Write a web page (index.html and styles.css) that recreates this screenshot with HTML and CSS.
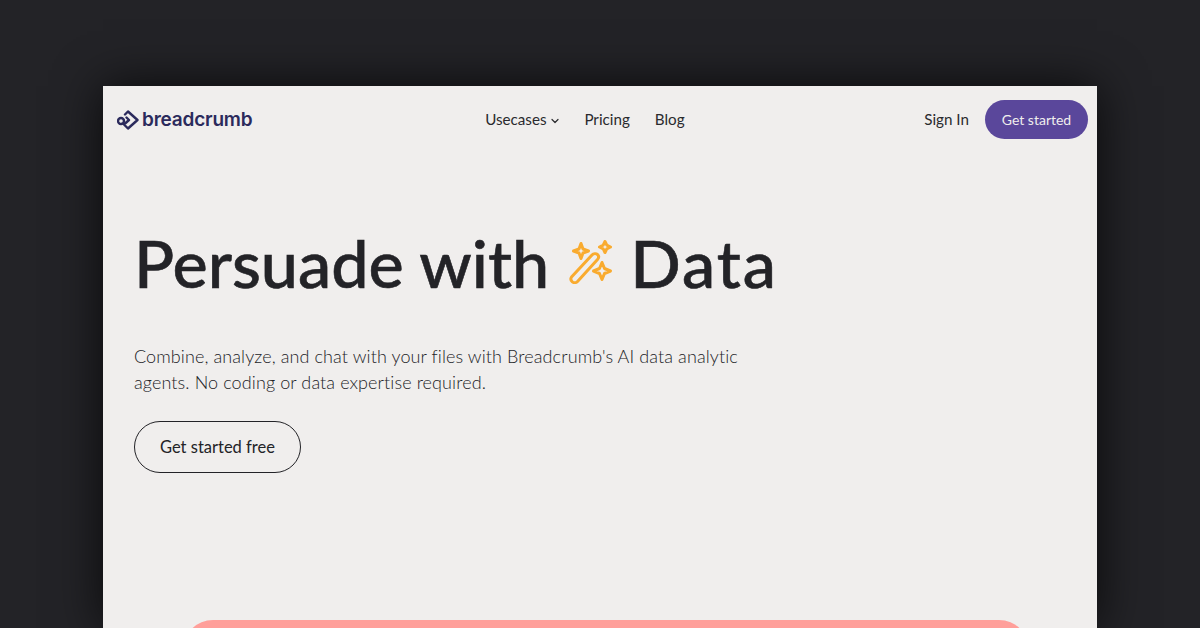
FILE: index.html
```html
<!DOCTYPE html>
<html lang="en">
<head>
  <meta charset="UTF-8" />
  <title>Breadcrumb</title>
  <link rel="stylesheet" href="styles.css">
</head>
<body>
  <div class="page">
    <nav class="nav">
      <a class="logo">
        <svg class="logo-mark" viewBox="0 0 22 20" width="22" height="20" fill="none" stroke="#2b2a5c" stroke-width="2.4" stroke-linejoin="round" stroke-linecap="round">
          <path d="M8 4.500 11 1.500 20.500 10 11 18.500 7 14.500 12 10 9.500 7.500" />
          <circle cx="4" cy="11" r="3" />
        </svg>
        <span>breadcrumb</span>
      </a>
      <div class="nav-links">
        <a class="nav-link">Usecases
          <svg class="chevron" viewBox="0 0 8 6" width="8" height="6" fill="none" stroke="#2a2a2e" stroke-width="1.2" stroke-linecap="round" stroke-linejoin="round">
            <path d="M1 1.500 4 4.500 7 1.500" />
          </svg>
        </a>
        <a class="nav-link">Pricing</a>
        <a class="nav-link">Blog</a>
      </div>
      <div class="nav-right">
        <a class="nav-link sign-in">Sign In</a>
        <a class="btn-primary">Get started</a>
      </div>
    </nav>

    <section class="hero">
      <h1>Persuade with
        <svg class="wand" viewBox="0 0 44 44" width="44" height="44" fill="none" stroke="#f9ab2f" stroke-width="3" stroke-linejoin="round" stroke-linecap="round">
          <path d="M2.500 37 23 15C24.500 13.500 27 13.200 28.500 14.500 30 15.900 29.800 18 28.500 19.500L8.500 41.500C7 43 4.500 43 3.200 41.700 1.800 40.300 1.500 38.500 2.500 37Z" />
          <path d="M12 3.500 14 9 19.500 11 14 13 12 18.500 10 13 4.500 11 10 9Z" />
          <path d="M36 1.500 37.800 5.200 41.500 7 37.800 8.800 36 12.500 34.200 8.800 30.500 7 34.200 5.200Z" />
          <path d="M33 22.500 35.500 28.500 41.500 31 35.500 33.500 33 39.500 30.500 33.500 24.500 31 30.500 28.500Z" />
        </svg>
        <span class="h1-last">Data</span></h1>
      <p class="lead">Combine, analyze, and chat with your files with Breadcrumb's AI data analytic agents. No coding or data expertise required.</p>
      <a class="btn-outline">Get started free</a>
    </section>

    <div class="preview"></div>
  </div>
</body>
</html>
```

FILE: styles.css
```css
html, body {
  height: 100%;
}

body {
  margin: 0;
  padding-top: 86px;
  box-sizing: border-box;
  overflow: hidden;
  background-color: #232327;
  font-family: 'Lato', sans-serif;
  color: #232327;
}

.page {
  width: 994px;
  height: 542px;
  margin-left: 103px;
  background-color: #f0eeed;
  box-shadow: 0 0 45px rgba(0, 0, 0, 0.75);
  overflow: hidden;
}

.nav {
  display: flex;
  justify-content: space-between;
  align-items: center;
  padding: 14px 9px 0 14px;
}

.logo {
  display: flex;
  align-items: center;
  gap: 3px;
  font-family: 'Inter', sans-serif;
  font-size: 19px;
  font-weight: 600;
  letter-spacing: -0.2px;
  color: #2b2a5c;
}

.logo-mark {
  flex: none;
}

.nav-links {
  display: flex;
  align-items: center;
  gap: 25px;
  margin-right: 7px;
  margin-top: -2px;
}

.nav-link {
  font-size: 15.200px;
  color: #2a2a2e;
}

.sign-in {
  margin-top: -2px;
}

.chevron {
  margin-left: 1px;
  vertical-align: 1px;
}

.nav-right {
  display: flex;
  align-items: center;
  gap: 16px;
}

.btn-primary {
  display: flex;
  align-items: center;
  justify-content: center;
  width: 103px;
  height: 39px;
  border-radius: 20px;
  background-color: #5a479b;
  color: #f0eeed;
  font-size: 14px;
}

.hero {
  padding: 80px 0 0 31px;
}

h1 {
  display: flex;
  align-items: center;
  gap: 20px;
  margin: 0;
  height: 86px;
  font-size: 66.500px;
  font-weight: 500;
  line-height: 86px;
  -webkit-text-stroke: 0.6px #232327;
  color: #232327;
}

.h1-last {
  margin-left: -3px;
  letter-spacing: 2px;
}

.wand {
  flex: none;
}

.lead {
  width: 620px;
  margin: 38px 0 0;
  font-size: 18px;
  font-weight: 300;
  line-height: 26px;
  letter-spacing: 0.1px;
  color: #232327;
}

.btn-outline {
  display: flex;
  align-items: center;
  justify-content: center;
  box-sizing: border-box;
  width: 167px;
  height: 52px;
  margin-top: 26px;
  border: 1px solid #232327;
  border-radius: 26px;
  font-size: 16.500px;
}

.preview {
  width: 846px;
  height: 120px;
  margin: 147px 0 0 80px;
  border-radius: 30px;
  background-color: #ff9f9a;
}
```
